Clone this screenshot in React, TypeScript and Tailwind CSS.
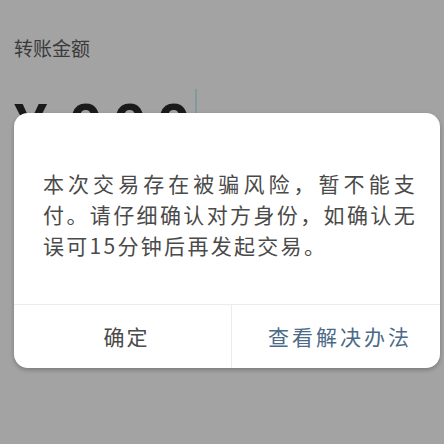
export default function App() {
  return (
    <div
      className="relative w-[444px] h-[444px] overflow-hidden bg-[#a3a3a3]"
      style={{ fontFamily: '"Noto Sans CJK SC", "Noto Sans", sans-serif' }}
    >
      {/* page under the overlay */}
      <div className="pl-[14px] pt-[36px]">
        <div className="text-[19px] leading-[24px] text-[#3a3a3a]">转账金额</div>
        <div
          className="mt-[35px] flex items-start text-[60px] leading-[60px] font-bold text-[#1a1a1a]"
          style={{ fontFamily: '"Liberation Sans", sans-serif' }}
        >
          <span className="w-[55px]">¥</span>
          <span className="tracking-[10.6px]">000</span>
          <span className="ml-[-6px] mt-[-6px] w-[2px] h-[30px] bg-[#7f9c9a]" />
        </div>
      </div>

      {/* risk alert dialog */}
      <div className="absolute left-[14px] top-[113px] w-[426px] h-[255px] rounded-[14px] bg-white shadow-[0_2px_4px_rgba(0,0,0,0.25)] flex flex-col overflow-hidden">
        <div className="flex-1 pl-[29px] pt-[55px]">
          <div className="w-[374px] text-[21px] leading-[31px] tracking-[2.3px] text-[#4a4a4a]">
            <p className="text-justify [text-align-last:justify]">本次交易存在被骗风险，暂不能支</p>
            <p className="text-justify [text-align-last:justify]">付。请仔细确认对方身份，如确认无</p>
            <p>误可15分钟后再发起交易。</p>
          </div>
        </div>
        <div className="h-[64px] flex border-t border-[#ececec]">
          <div className="w-[218px] pl-[8px] flex items-center justify-center border-r border-[#ececec] text-[21px] tracking-[2px] text-[#4a4a4a]">
            确定
          </div>
          <div className="flex-1 pl-[8px] flex items-center justify-center text-[21px] tracking-[3px] text-[#4b6a88]">
            查看解决办法
          </div>
        </div>
      </div>
    </div>
  );
}
